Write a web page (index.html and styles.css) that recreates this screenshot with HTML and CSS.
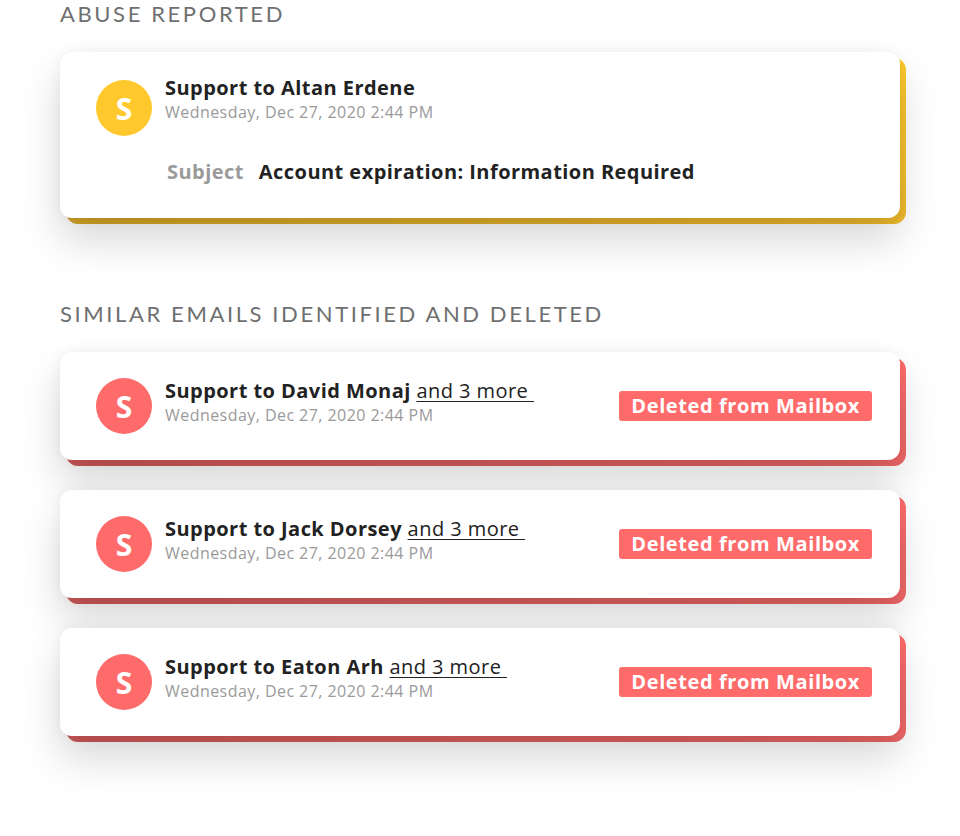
FILE: index.html
```html
<!DOCTYPE html>
<html lang="en">
<head>
<meta charset="utf-8">
<title>Abuse Reported</title>
<link rel="stylesheet" href="styles.css">
</head>
<body>
<main class="page">
  <section class="section">
    <h2 class="section-title">ABUSE REPORTED</h2>
    <div class="card card--yellow card--tall">
      <div class="row row--top">
        <div class="avatar avatar--yellow">S</div>
        <div class="meta">
          <div class="title">Support to Altan Erdene</div>
          <div class="date">Wednesday, Dec 27, 2020 2:44 PM</div>
        </div>
      </div>
      <div class="subject">
        <span class="subject-label">Subject</span>
        <span class="subject-text">Account expiration: Information Required</span>
      </div>
    </div>
  </section>

  <section class="section section--second">
    <h2 class="section-title">SIMILAR EMAILS IDENTIFIED AND DELETED</h2>
    <div class="list">
      <div class="card card--red">
        <div class="row">
          <div class="avatar avatar--red">S</div>
          <div class="meta">
            <div class="title">Support to David Monaj <a class="more">and 3 more </a></div>
            <div class="date">Wednesday, Dec 27, 2020 2:44 PM</div>
          </div>
          <span class="badge">Deleted from Mailbox</span>
        </div>
      </div>
      <div class="card card--red">
        <div class="row">
          <div class="avatar avatar--red">S</div>
          <div class="meta">
            <div class="title">Support to Jack Dorsey <a class="more">and 3 more </a></div>
            <div class="date">Wednesday, Dec 27, 2020 2:44 PM</div>
          </div>
          <span class="badge">Deleted from Mailbox</span>
        </div>
      </div>
      <div class="card card--red">
        <div class="row">
          <div class="avatar avatar--red">S</div>
          <div class="meta">
            <div class="title">Support to Eaton Arh <a class="more">and 3 more </a></div>
            <div class="date">Wednesday, Dec 27, 2020 2:44 PM</div>
          </div>
          <span class="badge">Deleted from Mailbox</span>
        </div>
      </div>
    </div>
  </section>
</main>
</body>
</html>
```

FILE: styles.css
```css
* { box-sizing: border-box; }

html {
  background: #ffffff;
}

body {
  margin: 0;
  padding: 0;
  font-family: "Open Sans", "Lato", sans-serif;
  color: #222222;
}

.page {
  width: 960px;
  padding: 0 60px 100px;
}

.section-title {
  margin: 0;
  height: 28px;
  font-family: "Lato", "Open Sans", sans-serif;
  font-size: 22px;
  line-height: 28px;
  font-weight: 400;
  letter-spacing: 2.6px;
  color: #6f6f6f;
}

.section .card--tall { margin-top: 24px; }

.section--second { margin-top: 82px; }

.list {
  margin-top: 24px;
  display: flex;
  flex-direction: column;
  gap: 30px;
}

.card {
  position: relative;
  width: 840px;
  height: 108px;
  background: #ffffff;
  border-radius: 12px;
  padding: 0 28px 0 36px;
  display: flex;
  flex-direction: column;
  justify-content: center;
  box-shadow: 0 22px 40px rgba(0, 0, 0, 0.16), 0 0 14px rgba(0, 0, 0, 0.05);
}

.card::before {
  content: "";
  position: absolute;
  inset: 6px -6px -6px 6px;
  border-radius: 12px;
  z-index: -1;
}

.card--yellow::before {
  background: linear-gradient(200deg, #ffca2e 0%, #ecb72b 45%, #d6a527 100%);
}

.card--red::before {
  background: linear-gradient(200deg, #ff6e6e 0%, #e66363 45%, #d05959 100%);
}

.card--tall {
  height: 166px;
  justify-content: flex-start;
  padding-top: 28px;
}

.row {
  display: flex;
  align-items: center;
}

.row .meta { margin-bottom: 6px; }

.row--top { align-items: flex-start; }
.row--top .meta { margin: -3px 0 0; }

.avatar {
  flex: 0 0 56px;
  width: 56px;
  height: 56px;
  border-radius: 50%;
  color: #ffffff;
  font-size: 30px;
  font-weight: 700;
  display: flex;
  align-items: center;
  justify-content: center;
  margin-right: 13px;
}

.avatar--yellow { background: #ffc92e; }
.avatar--red { background: #ff6b6b; }

.meta {
  flex: 1;
  display: flex;
  flex-direction: column;
  gap: 2px;
}

.title {
  font-size: 20px;
  line-height: 22px;
  font-weight: 700;
  letter-spacing: 0.45px;
  color: #222222;
}

.more {
  font-weight: 400;
  color: #222222;
  text-decoration: underline;
  text-underline-offset: 3px;
  text-decoration-thickness: 1px;
  white-space: pre;
}

.date {
  font-size: 16px;
  line-height: 22px;
  letter-spacing: 0.45px;
  color: #9a9a9a;
}

.badge {
  background: #ff6b6b;
  color: #ffffff;
  font-size: 20px;
  font-weight: 700;
  line-height: 30px;
  height: 30px;
  padding: 0 12px;
  letter-spacing: 0.6px;
  border-radius: 3px;
}

.subject {
  margin-top: 22px;
  padding-left: 71px;
  display: flex;
  align-items: baseline;
  gap: 15px;
  font-size: 20px;
  font-weight: 700;
  letter-spacing: 0.45px;
}

.subject-label { color: #9a9a9a; }
.subject-text { color: #222222; }
```
